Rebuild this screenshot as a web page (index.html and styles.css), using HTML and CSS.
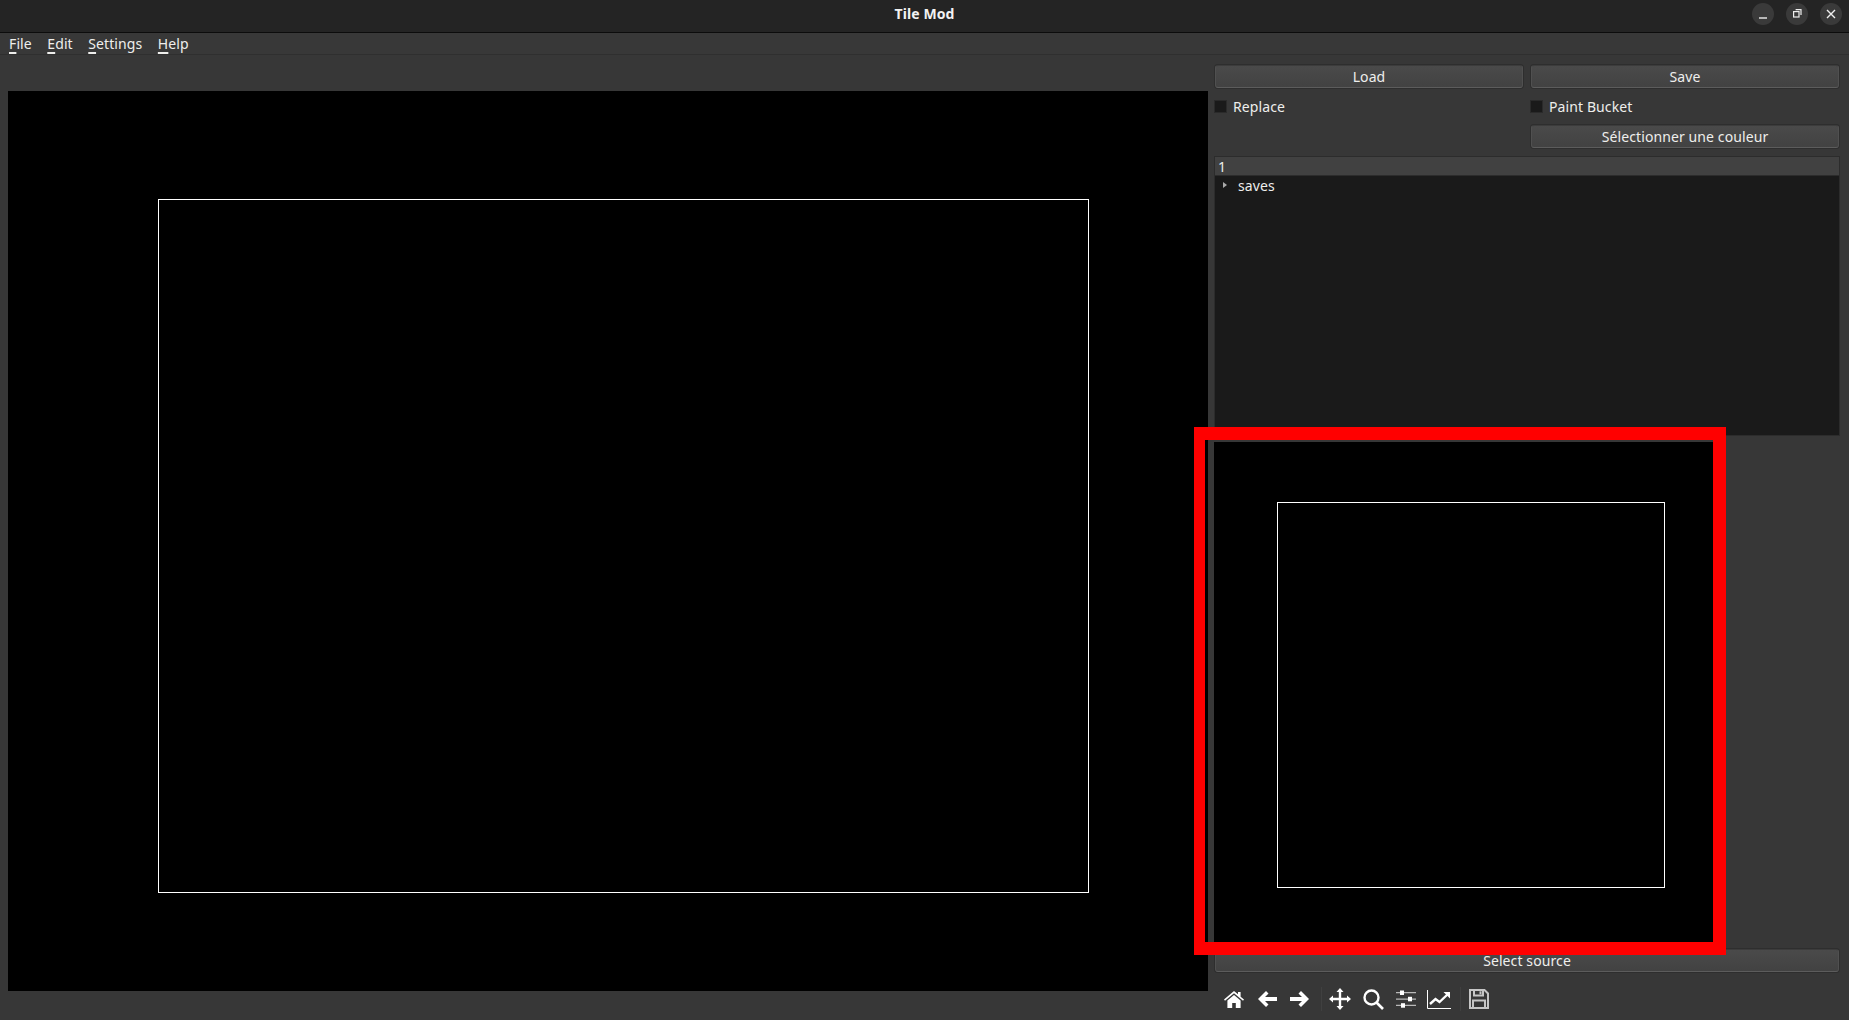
FILE: index.html
```html
<!DOCTYPE html>
<html lang="fr">

<head>
  <meta charset="UTF-8" />
  <title>Tile Mod</title>
  <link rel="stylesheet" href="styles.css">
</head>

<body>
  <div class="titlebar">
    <div class="title">Tile Mod</div>
    <div class="win-buttons">
      <div class="win-btn">
        <svg width="12" height="12" viewBox="0 0 12 12"><path d="M2 10h8" stroke="#eee" stroke-width="1.4" /></svg>
      </div>
      <div class="win-btn">
        <svg width="12" height="12" viewBox="0 0 12 12" fill="none" stroke="#eee" stroke-width="1.2"><rect x="2.600" y="3.600" width="5.400" height="5.400" /><path d="M4.600 1.600h5.400v5.400" /></svg>
      </div>
      <div class="win-btn">
        <svg width="12" height="12" viewBox="0 0 12 12"><path d="M2 2l8 8M10 2l-8 8" stroke="#eee" stroke-width="1.4" /></svg>
      </div>
    </div>
  </div>

  <div class="menubar">
    <span class="menu-item"><u>F</u>ile</span>
    <span class="menu-item"><u>E</u>dit</span>
    <span class="menu-item"><u>S</u>ettings</span>
    <span class="menu-item"><u>H</u>elp</span>
  </div>

  <div class="content">
    <div class="canvas main-canvas">
      <div class="plot-frame"></div>
    </div>

    <div class="side">
      <div class="side-controls">
        <button class="btn">Load</button>
        <button class="btn">Save</button>
        <label class="check"><span class="check-box"></span>Replace</label>
        <label class="check"><span class="check-box"></span>Paint Bucket</label>
        <span></span>
        <button class="btn">Sélectionner une couleur</button>
      </div>

      <div class="tree">
        <div class="tree-header">1</div>
        <div class="tree-row"><span class="tree-arrow"></span>saves</div>
      </div>

      <div class="canvas small-canvas">
        <div class="plot-frame"></div>
      </div>

      <button class="btn btn-source">Select source</button>

      <div class="toolbar">
        <!-- home -->
        <svg class="tool home" width="20" height="17" viewBox="0 0 20 17" fill="#fff"><path d="M10 0L0 8.600l1 1.200L10 2.200l9 7.600 1-1.200-3.400-2.900V1h-2.600v2.300z" /><path d="M10 4L3.400 9.600V17h4.800v-5h3.600v5h4.800V9.600z" /></svg>
        <!-- back -->
        <svg class="tool back" width="19" height="16" viewBox="0 0 19 16" fill="#fff"><path d="M8 0l2.500 2.500L7 6h12v4H7l3.500 3.500L8 16 0 8z" /></svg>
        <!-- forward -->
        <svg class="tool forward" width="19" height="16" viewBox="0 0 19 16" fill="#fff"><path d="M11 0L8.500 2.500 12 6H0v4h12l-3.500 3.500L11 16l8-8z" /></svg>
        <span class="tool-sep"></span>
        <!-- move -->
        <svg class="tool move" width="22" height="22" viewBox="0 0 22 22" fill="#fff"><path d="M11 0l3.500 4h-2.300v5.800H18V7.500l4 3.500-4 3.500v-2.300h-5.800V18h2.300L11 22l-3.500-4h2.300v-5.800H4v2.300L0 11l4-3.500v2.300h5.800V4H7.500z" /></svg>
        <!-- zoom -->
        <svg class="tool zoom" width="21" height="21" viewBox="0 0 21 21" fill="none" stroke="#fff"><circle cx="8.500" cy="8.500" r="7" stroke-width="2.400" /><path d="M13.500 13.500L20 20" stroke-width="2.600" /></svg>
        <!-- subplots -->
        <svg class="tool sliders" width="20" height="18" viewBox="0 0 20 18"><path d="M0 2h20v1.300H0zM0 8.400h20v1.300H0zM0 14.800h20v1.300H0z" fill="#b8b8b8" /><rect x="4" y="0.500" width="4" height="4.500" fill="#fff" /><rect x="12" y="6.800" width="4" height="4.500" fill="#fff" /><rect x="5" y="13.200" width="4" height="4.500" fill="#fff" /></svg>
        <!-- chart -->
        <svg class="tool chart" width="24" height="19" viewBox="0 0 24 19" fill="none" stroke="#fff"><path d="M.5 0v18.500H24" stroke-width="1" /><path d="M3 14l5.500-5 4 3L21 4" stroke-width="2.400" /><path d="M16.500 2H23v6.500z" fill="#fff" stroke="none" /></svg>
        <span class="tool-sep sep-two"></span>
        <!-- save -->
        <svg class="tool save" width="20" height="20" viewBox="0 0 20 20" fill="none" stroke="#c6c6c6" stroke-width="2"><path d="M1 1h14.500L19 4.500V19H1z" /><path d="M5 1v5.500h9V1M4 19v-7.500h12V19" /><rect x="10.500" y="2.300" width="2" height="3" fill="#c6c6c6" stroke="none" /></svg>
      </div>
    </div>
  </div>

  <div class="annotation"></div>
</body>

</html>
```

FILE: styles.css
```css
html,
body {
  margin: 0;
  height: 100%;
}

body {
  font-family: "Noto Sans", Arial, sans-serif;
  font-size: 14px;
  letter-spacing: 0.1px;
  color: #eeeeec;
  background: #373737;
  overflow: hidden;
}

.titlebar {
  height: 32px;
  display: flex;
  align-items: center;
  justify-content: center;
  background: #242424;
  border-bottom: 1px solid #0c0c0c;
  position: relative;
}

.title {
  margin-bottom: 5px;
  font-weight: bold;
  font-size: 14px;
  color: #f2f2f2;
}

.win-buttons {
  position: absolute;
  right: 7px;
  top: 3px;
  display: flex;
  gap: 12px;
}

.win-btn {
  width: 22px;
  height: 22px;
  border-radius: 50%;
  background: #3a3a3a;
  display: flex;
  align-items: center;
  justify-content: center;
}

.menubar {
  height: 21px;
  display: flex;
  align-items: center;
  padding-left: 9px;
  gap: 15.500px;
  background: #383838;
  border-bottom: 1px solid #2f2f2f;
}

.menu-item u {
  text-underline-offset: 3px;
  text-decoration-thickness: 2px;
}

.content {
  display: grid;
  grid-template-columns: 1200px 626px;
  gap: 6px;
  padding-top: 10px;
  padding-left: 8px;
}

.canvas {
  background: #000;
}

.plot-frame {
  border: 1px solid #fff;
  box-sizing: border-box;
}

.main-canvas {
  width: 1200px;
  height: 900px;
  margin-top: 26px;
  padding: 108px 0 0 150px;
  box-sizing: border-box;
}

.main-canvas .plot-frame {
  width: 931px;
  height: 694px;
}

.side {
  display: flex;
  flex-direction: column;
}

.side-controls {
  display: grid;
  grid-template-columns: 308px 308px;
  column-gap: 8px;
  padding: 0 1px;
  font-size: 14px;
}

.btn {
  height: 23px;
  padding: 0;
  font-family: inherit;
  font-size: 14px;
  letter-spacing: inherit;
  line-height: 20px;
  color: #eeeeec;
  background: linear-gradient(#4a4a4a, #424242);
  border: 1px solid #505050;
  border-top-color: #3c3c3c;
  border-bottom-color: #5c5c5c;
  border-radius: 3px;
  box-shadow: 0 0 0 1px #2e2e2e;
}

.check {
  height: 37px;
  display: flex;
  align-items: center;
  gap: 6px;
  margin-left: -1px;
}

.check-box {
  width: 11px;
  height: 11px;
  background: #1a1a1a;
  border: 1px solid #2a2a2a;
}

.tree {
  height: 280px;
  margin: 8px 0 6px;
  background: #1a1a1a;
  border: 1px solid #2c2c2c;
  box-sizing: border-box;
}

.tree-header {
  height: 19px;
  line-height: 19px;
  padding-left: 3px;
  background: #414141;
  border-bottom: 1px solid #2c2c2c;
  box-sizing: border-box;
}

.tree-row {
  height: 18px;
  display: flex;
  align-items: center;
  padding-left: 8px;
}

.tree-arrow {
  width: 0;
  height: 0;
  margin-right: 11px;
  border-left: 4px solid #aaa;
  border-top: 3.500px solid transparent;
  border-bottom: 3.500px solid transparent;
}

.small-canvas {
  width: 512px;
  height: 501px;
  padding: 60px 0 0 63px;
  box-sizing: border-box;
}

.small-canvas .plot-frame {
  width: 388px;
  height: 386px;
}

.btn-source {
  flex: none;
  width: 624px;
  height: 23px;
  margin: 6px 0 0 1px;
}

.toolbar {
  display: flex;
  align-items: center;
  height: 42px;
  padding: 6px 0 0 10px;
}

.tool {
  flex: none;
}

.back {
  margin-left: 14px;
}

.forward {
  margin-left: 13px;
}

.tool-sep {
  width: 1px;
  height: 24px;
  margin: 0 7px 0 12px;
  background: #404040;
}

.zoom {
  margin-left: 12px;
}

.sliders {
  margin-left: 12px;
}

.chart {
  margin-left: 11px;
}

.sep-two {
  margin: 0 8px 0 9px;
}

/* red marker drawn over the screenshot */
.annotation {
  position: absolute;
  left: 1194px;
  top: 427px;
  width: 532px;
  height: 528px;
  box-sizing: border-box;
  border: 13px solid #f00;
  border-left-width: 11px;
}
```
